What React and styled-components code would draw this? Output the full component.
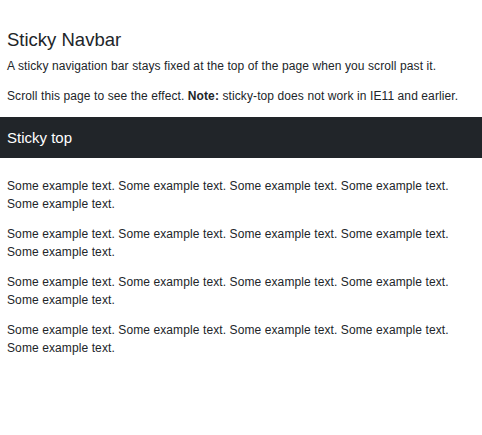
import React from 'react'
import styled, { createGlobalStyle } from 'styled-components'

const GlobalStyle = createGlobalStyle`
  body {
    margin: 0;
    font-family: "Liberation Sans", Arial, sans-serif;
    font-size: 12px;
    line-height: 1.5;
    color: #212529;
    background: #fff;
  }
`

const Intro = styled.div`
  padding: 29px 7px 0;
`

const Title = styled.h3`
  margin: 0 0 6px;
  font-size: 18.5px;
  font-weight: 500;
  line-height: 1.2;
`

const Para = styled.p`
  margin: 0 0 12px;
  letter-spacing: 0.1px;
`

const Navbar = styled.nav`
  position: sticky;
  top: 0;
  display: flex;
  align-items: center;
  height: 41px;
  padding: 2px 7px 0;
  box-sizing: border-box;
  background-color: #212529;
`

const Brand = styled.a`
  color: #fff;
  font-size: 15px;
  text-decoration: none;
`

const Content = styled.div`
  padding: 19px 7px 0;
`

const text = 'Some example text. '.repeat(5).trim()

const App = () => {
  return (
    <>
      <GlobalStyle />
      <Intro>
        <Title>Sticky Navbar</Title>
        <Para>A sticky navigation bar stays fixed at the top of the page when you scroll past it.</Para>
        <Para>Scroll this page to see the effect. <b>Note:</b> sticky-top does not work in IE11 and earlier.</Para>
      </Intro>
      <Navbar>
        <Brand href="#">Sticky top</Brand>
      </Navbar>
      <Content>
        {[0, 1, 2, 3].map((i) => (
          <Para key={i}>{text}</Para>
        ))}
      </Content>
    </>
  )
}

export default App
